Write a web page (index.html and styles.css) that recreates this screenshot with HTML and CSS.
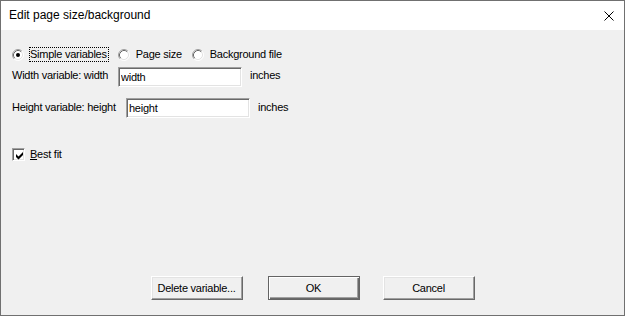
FILE: index.html
```html
<!DOCTYPE html>
<html lang="en">
<head>
    <meta charset="UTF-8">
    <title>Edit page size/background</title>
    <link rel="stylesheet" href="styles.css">
</head>
<body>
    <div class="window">
        <div class="titlebar">
            <span class="title">Edit page size/background</span>
            <svg class="close" width="10" height="10" viewBox="0 0 10 10">
                <path d="M0.5 0.5 L9.5 9.5 M9.5 0.5 L0.5 9.5" stroke="#000" stroke-width="1" fill="none"/>
            </svg>
        </div>
        <div class="content">
            <div class="radio-row">
                <label class="radio first">
                    <svg class="radio-dot" width="12" height="12" viewBox="0 0 12 12">
                        <circle cx="6" cy="6" r="5" fill="#fff"/>
                        <path d="M2.11 9.89 A5.5 5.5 0 0 1 9.89 2.11" stroke="#a0a0a0" fill="none"/>
                        <path d="M9.89 2.11 A5.5 5.5 0 0 1 2.11 9.89" stroke="#fff" fill="none"/>
                        <path d="M2.82 9.18 A4.5 4.5 0 0 1 9.18 2.82" stroke="#696969" fill="none"/>
                        <path d="M9.18 2.82 A4.5 4.5 0 0 1 2.82 9.18" stroke="#e3e3e3" fill="none"/>
                        <circle cx="6" cy="6" r="2" fill="#000"/>
                    </svg>
                    <span class="radio-label focused">Simple variables</span>
                </label>
                <label class="radio second">
                    <svg class="radio-dot" width="12" height="12" viewBox="0 0 12 12">
                        <circle cx="6" cy="6" r="5" fill="#fff"/>
                        <path d="M2.11 9.89 A5.5 5.5 0 0 1 9.89 2.11" stroke="#a0a0a0" fill="none"/>
                        <path d="M9.89 2.11 A5.5 5.5 0 0 1 2.11 9.89" stroke="#fff" fill="none"/>
                        <path d="M2.82 9.18 A4.5 4.5 0 0 1 9.18 2.82" stroke="#696969" fill="none"/>
                        <path d="M9.18 2.82 A4.5 4.5 0 0 1 2.82 9.18" stroke="#e3e3e3" fill="none"/>
                    </svg>
                    <span class="radio-label">Page size</span>
                </label>
                <label class="radio third">
                    <svg class="radio-dot" width="12" height="12" viewBox="0 0 12 12">
                        <circle cx="6" cy="6" r="5" fill="#fff"/>
                        <path d="M2.11 9.89 A5.5 5.5 0 0 1 9.89 2.11" stroke="#a0a0a0" fill="none"/>
                        <path d="M9.89 2.11 A5.5 5.5 0 0 1 2.11 9.89" stroke="#fff" fill="none"/>
                        <path d="M2.82 9.18 A4.5 4.5 0 0 1 9.18 2.82" stroke="#696969" fill="none"/>
                        <path d="M9.18 2.82 A4.5 4.5 0 0 1 2.82 9.18" stroke="#e3e3e3" fill="none"/>
                    </svg>
                    <span class="radio-label">Background file</span>
                </label>
            </div>

            <div class="field-row width-row">
                <span class="label">Width variable: width</span>
                <input class="text-box" type="text" value="width">
                <span class="unit">inches</span>
            </div>

            <div class="field-row height-row">
                <span class="label">Height variable: height</span>
                <input class="text-box" type="text" value="height">
                <span class="unit">inches</span>
            </div>

            <label class="check-row">
                <span class="check-box">
                    <svg width="9" height="9" viewBox="0 0 9 9">
                        <path d="M1 3 L3.5 5.5 L8 1 L8 4 L3.5 8.5 L1 6 Z" fill="#000"/>
                    </svg>
                </span>
                <span class="check-label"><u>B</u>est fit</span>
            </label>

            <div class="buttons">
                <button class="btn">Delete variable...</button>
                <button class="btn btn-default">OK</button>
                <button class="btn">Cancel</button>
            </div>
        </div>
    </div>
</body>
</html>
```

FILE: styles.css
```css
body {
    margin: 0;
    background: #f0f0f0;
    font-family: "Liberation Sans", Arial, sans-serif;
    font-size: 11px;
    color: #000;
}
.window {
    width: 625px;
    height: 316px;
    box-sizing: border-box;
    border: 1px solid #707070;
    display: flex;
    flex-direction: column;
}
.titlebar {
    height: 29px;
    flex: none;
    background: #fff;
    display: flex;
    align-items: center;
    justify-content: space-between;
    padding: 0 10px 0 8px;
}
.title {
    font-size: 12px;
    line-height: 29px;
    color: #000;
}
.close {
    display: block;
}
.content {
    flex: 1;
    background: #f0f0f0;
    display: flex;
    flex-direction: column;
    padding: 17px 0 15px 11px;
    line-height: 13px;
    letter-spacing: -0.25px;
}
.radio-row {
    display: flex;
    align-items: center;
    height: 15px;
}
.radio {
    display: flex;
    align-items: center;
    gap: 5px;
}
.radio-dot {
    display: block;
}
.radio-label {
    border: 1px solid transparent;
    padding: 0 1px 0 0;
}
.radio-label.focused {
    border: 1px dotted #000;
}
.radio.second {
    margin-left: 9px;
}
.radio.third {
    margin-left: 8px;
}
.field-row {
    display: flex;
    align-items: flex-start;
    height: 20px;
}
.width-row {
    margin-top: 5px;
}
.height-row {
    margin-top: 11px;
}
.label {
    padding-top: 3px;
}
.width-row .label {
    width: 106px;
    padding-top: 2px;
}
.height-row .label {
    width: 114px;
}
.text-box {
    width: 124px;
    height: 20px;
    box-sizing: border-box;
    margin: 0;
    padding: 0 0 0 2px;
    font: inherit;
    letter-spacing: inherit;
    color: #000;
    background: #fff;
    border: 1px solid;
    border-color: #a0a0a0 #fff #fff #a0a0a0;
    box-shadow: inset 1px 1px #696969, inset -1px -1px #e3e3e3;
    outline: none;
}
.unit {
    margin-left: 8px;
    padding-top: 3px;
}
.width-row .unit {
    padding-top: 2px;
}
.check-row {
    display: flex;
    align-items: center;
    gap: 5px;
    margin-top: 30px;
}
.check-box {
    width: 13px;
    height: 13px;
    box-sizing: border-box;
    background: #fff;
    border: 1px solid;
    border-color: #a0a0a0 #fff #fff #a0a0a0;
    box-shadow: inset 1px 1px #696969, inset -1px -1px #e3e3e3;
    display: flex;
    align-items: center;
    justify-content: center;
}
.check-box svg {
    display: block;
    margin: 1px 0 0 1px;
}
.buttons {
    margin-top: auto;
    display: flex;
    justify-content: center;
    margin-left: -11px;
}
.btn {
    width: 92px;
    height: 24px;
    box-sizing: border-box;
    padding: 0;
    font: inherit;
    letter-spacing: inherit;
    color: #000;
    background: #f0f0f0;
    border: 1px solid;
    border-color: #fff #696969 #696969 #fff;
    box-shadow: inset -1px -1px #a0a0a0, inset 1px 1px #e3e3e3;
}
.btn-default {
    margin: 0 23px 0 25px;
    border: 1px solid #646464;
    box-shadow: inset 1px 1px #fff, inset -1px -1px #696969, inset -2px -2px #a0a0a0;
}
```
